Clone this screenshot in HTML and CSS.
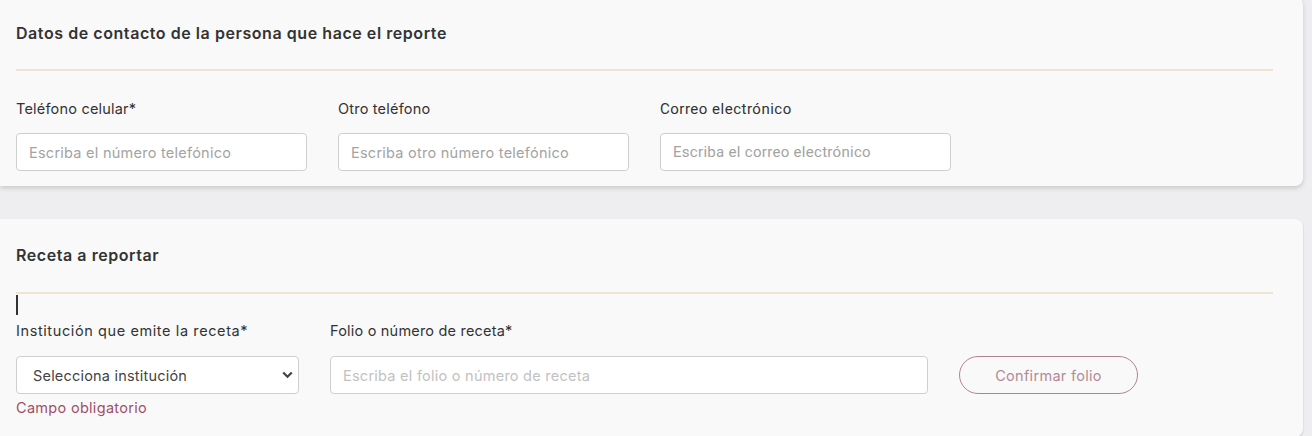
FILE: index.html
```html
<!DOCTYPE html>
<html lang="es">
<head>
<meta charset="utf-8">
<link rel="stylesheet" href="styles.css">
</head>
<body>
<section class="card card-top">
  <h2 class="card-title">Datos de contacto de la persona que hace el reporte</h2>
  <hr class="divider">
  <div class="row">
    <div class="field">
      <label class="label">Teléfono celular*</label>
      <input class="input" type="text" placeholder="Escriba el número telefónico">
    </div>
    <div class="field">
      <label class="label">Otro teléfono</label>
      <input class="input" type="text" placeholder="Escriba otro número telefónico">
    </div>
    <div class="field">
      <label class="label label-alt">Correo electrónico</label>
      <input class="input input-alt" type="text" placeholder="Escriba el correo electrónico">
    </div>
  </div>
</section>
<section class="card card-bottom">
  <h2 class="card-title">Receta a reportar</h2>
  <hr class="divider">
  <span class="caret"></span>
  <div class="row row-2">
    <div class="field field-select">
      <label class="label label-wide">Institución que emite la receta*</label>
      <div class="select">
        <span>Selecciona institución</span>
        <svg class="chev" width="11" height="8" viewBox="0 0 11 8"><path d="M1.2 1.5 L5.5 5.8 L9.8 1.5" fill="none" stroke="#444" stroke-width="2.2"/></svg>
      </div>
      <span class="error">Campo obligatorio</span>
    </div>
    <div class="field field-folio">
      <label class="label">Folio o número de receta*</label>
      <input class="input input-light" type="text" placeholder="Escriba el folio o número de receta">
    </div>
    <button class="btn" type="button">Confirmar folio</button>
  </div>
</section>
</body>
</html>
```
FILE: styles.css
```css
* { box-sizing: border-box; }
html, body { margin: 0; padding: 0; }
body {
  background: #eeeef1;
  font-family: "Inter", "Open Sans", sans-serif;
  color: #333;
  width: 1312px;
  height: 436px;
  overflow: hidden;
}
.card {
  width: 1303px;
  background: #f9f9f9;
  border-radius: 0 8px 8px 0;
  box-shadow: 0 2px 5px rgba(0,0,0,0.16);
  padding: 0 16px 0 16px;
  display: flex;
  flex-direction: column;
}
.card-top {
  margin-top: -3px;
  height: 189px;
  padding-top: 26px;
}
.card-bottom {
  margin-top: 33px;
  height: 218px;
  padding-top: 26px;
  box-shadow: 0 1px 2px rgba(0,0,0,0.2);
}
.card-title {
  margin: 0;
  font-size: 16px;
  font-weight: 600;
  line-height: 20px;
  color: #333;
  letter-spacing: 0.56px;
}
.divider {
  margin: 0;
  border: 0;
  height: 2px;
  background: #ede4d4;
  width: 1257px;
}
.card-top .divider { margin-top: 26px; }
.card-bottom .divider { margin-top: 27px; }
.caret {
  width: 2px;
  height: 20px;
  background: #333;
  margin-top: 1px;
}
.row {
  display: flex;
  gap: 31px;
  margin-top: 29px;
}
.row-2 {
  margin-top: 7px;
  gap: 31px;
  align-items: flex-start;
}
.field {
  display: flex;
  flex-direction: column;
  width: 291px;
}
.label {
  font-size: 14.5px;
  line-height: 18px;
  color: #333;
  letter-spacing: 0.2px;
  margin-bottom: 15px;
}
.label-wide { letter-spacing: 0.6px; }
.row-2 .label { margin-bottom: 16px; }
.label-alt {
  font-family: "Roboto", sans-serif;
  font-size: 15px;
  letter-spacing: 0.5px;
}
.input {
  height: 38px;
  border: 1px solid #cfcfcf;
  border-radius: 4px;
  background: #fff;
  padding: 0 12px;
  font-family: inherit;
  font-size: 14.5px;
  letter-spacing: 0.25px;
  outline: none;
}
.input::placeholder { color: #a3a3a3; }
.input-light::placeholder { color: #c2c2c2; }
.input-alt { font-family: "Roboto", sans-serif; font-size: 15px; letter-spacing: 0.3px; }
.field-select { width: 283px; }
.field-folio { width: 598px; }
.select {
  height: 38px;
  border: 1px solid #cfcfcf;
  border-radius: 4px;
  background: #fff;
  display: flex;
  align-items: center;
  justify-content: space-between;
  padding: 0 5px 0 16px;
  font-size: 14.5px;
  letter-spacing: 0.2px;
  color: #444;
}
.chev { display: block; }
.error {
  margin-top: 6px;
  font-size: 14.5px;
  letter-spacing: 0.3px;
  line-height: 16px;
  color: #9e5166;
}
.btn {
  margin-top: 34px;
  width: 179px;
  height: 38px;
  border: 1px solid #b3848f;
  border-radius: 19px;
  background: transparent;
  color: #b38a96;
  font-family: inherit;
  font-size: 14.5px;
  letter-spacing: 0.3px;
}
```
